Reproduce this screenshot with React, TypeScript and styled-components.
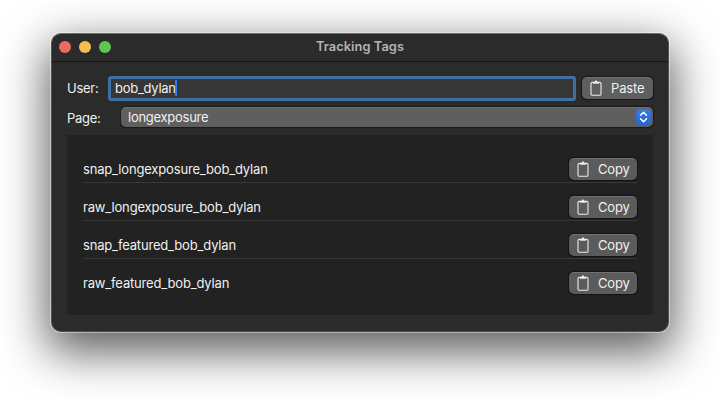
import React, { useState } from "react";
import styled, { createGlobalStyle } from "styled-components";

const GlobalStyle = createGlobalStyle`
  *, *::before, *::after { box-sizing: border-box; }
  html, body { margin: 0; background: #fff; }
  body { height: 400px; overflow: hidden; }
  body, button, input {
    font-family: Inter, "Liberation Sans", sans-serif;
    font-size: 13px;
    line-height: 16px;
    letter-spacing: -0.17px;
    color: #f0f0f0;
  }
`;

const Desktop = styled.main`
  width: 720px;
  height: 400px;
  padding: 33px 51px 0;
  overflow: hidden;
`;

const Window = styled.section`
  width: 618px;
  height: 299px;
  display: flex;
  flex-direction: column;
  border: 1px solid #505050;
  border-top-color: #6b6b6b;
  border-radius: 10px;
  background: #2b2b2b;
  overflow: hidden;
  box-shadow: 0 0 0 1px rgba(255, 255, 255, 0.4), 0 16px 46px 4px rgba(0, 0, 0, 0.64);
`;

const TitleBar = styled.header`
  height: 28px;
  flex: none;
  display: grid;
  grid-template-columns: 1fr auto 1fr;
  align-items: center;
  padding: 0 7px 1px;
  border-bottom: 1px solid #151515;
`;

const Lights = styled.div`
  display: flex;
  gap: 8px;
`;

const Light = styled.span<{ $color: string }>`
  width: 12px;
  height: 12px;
  border-radius: 50%;
  background: ${(p) => p.$color};
`;

const Title = styled.h1`
  margin: 0;
  font-size: 12.8px;
  font-weight: 600;
  line-height: 16px;
  letter-spacing: 0.08px;
  color: #b4b4b4;
`;

const Content = styled.div`
  padding: 14px 15px 0;
`;

const FieldRow = styled.div<{ $height: number; $labelWidth: number }>`
  display: grid;
  grid-template-columns: ${(p) => p.$labelWidth}px 1fr auto;
  align-items: center;
  height: ${(p) => p.$height}px;
`;

const UserInput = styled.div`
  height: 25px;
  display: flex;
  align-items: center;
  padding: 0 3px 2px 4px;
  border: 3px solid #3f6f9f;
  border-radius: 3px;
  background: #373737;
`;

const Value = styled.span`
  letter-spacing: -0.27px;
`;

const FieldLabel = styled(Value)`
  padding-bottom: 1px;
`;

const Caret = styled.span`
  width: 2px;
  height: 16px;
  margin-left: -1px;
  background: #3478f6;
`;

const PushButton = styled.button<{ $width: number; $tone?: string }>`
  width: ${(p) => p.$width}px;
  height: 22px;
  display: flex;
  align-items: center;
  padding: 0 0 1px 8px;
  gap: 9px;
  border: 0;
  border-top: 1px solid #717171;
  border-radius: 5px;
  background: ${(p) => p.$tone ?? "#5b5b5b"};
  box-shadow: 0 0 1px 0.5px rgba(0, 0, 0, 0.45);
`;

const PasteSlot = styled.div`
  margin-top: -2px;
  padding-left: 6px;
`;

const Select = styled.div`
  height: 20px;
  margin: -2px 0 0 1px;
  display: flex;
  align-items: center;
  justify-content: space-between;
  padding: 0 2px 2px 7px;
  border-top: 1px solid #717171;
  border-radius: 5px;
  background: #5f5f5f;
  box-shadow: 0 0 1px 0.5px rgba(0, 0, 0, 0.4);
`;

const Stepper = styled.svg`
  display: block;
  margin-top: 1px;
  border-radius: 4px;
  background: linear-gradient(#3979e5, #2864cd);
`;

const Panel = styled.div`
  height: 180px;
  padding: 10px 16px 0;
  background: #222222;
`;

const TagRow = styled.div`
  height: 38px;
  display: flex;
  align-items: center;
  justify-content: space-between;
  padding-top: 11px;
  border-bottom: 1px solid #383838;

  &:last-child {
    border-bottom-color: transparent;
  }
`;

const Icon = styled.svg`
  flex: none;
  display: block;
`;

function Clipboard() {
  return (
    <Icon width="12" height="16" viewBox="0 0 12 16" fill="none">
      <rect x="1" y="2.4" width="10" height="12.9" rx="1.4" stroke="#ededed" strokeWidth="1.1" />
      <path d="M3.1 3.8V2.2H4.6C4.7 1 5.1.4 6 .4s1.3.6 1.4 1.8h1.5v1.6z" fill="#ededed" />
    </Icon>
  );
}

const tags = ["snap_longexposure", "raw_longexposure", "snap_featured", "raw_featured"];

export default function App() {
  const [user] = useState("bob_dylan");
  return (
    <>
      <GlobalStyle />
      <Desktop>
        <Window>
          <TitleBar>
            <Lights>
              <Light $color="#ed6a5f" />
              <Light $color="#f5bf4f" />
              <Light $color="#61c554" />
            </Lights>
            <Title>Tracking Tags</Title>
          </TitleBar>
          <Content>
            <FieldRow $height={25} $labelWidth={41}>
              <FieldLabel>User:</FieldLabel>
              <UserInput>
                <Value>{user}</Value>
                <Caret />
              </UserInput>
              <PasteSlot>
                <PushButton $width={71} $tone="#5f5f5f">
                  <Clipboard />
                  Paste
                </PushButton>
              </PasteSlot>
            </FieldRow>
            <FieldRow $height={34} $labelWidth={53}>
              <FieldLabel>Page:</FieldLabel>
              <Select>
                <Value>longexposure</Value>
                <Stepper width="15" height="16" viewBox="0.5 0 15 16">
                  <path
                    d="M5 6.2 8 3.3l3 2.9M5 9.8l3 2.9 3-2.9"
                    fill="none"
                    stroke="#fff"
                    strokeWidth="1.5"
                    strokeLinecap="round"
                    strokeLinejoin="round"
                  />
                </Stepper>
              </Select>
            </FieldRow>
            <Panel>
              {tags.map((tag) => (
                <TagRow key={tag}>
                  <span>{`${tag}_${user}`}</span>
                  <PushButton $width={68}>
                    <Clipboard />
                    Copy
                  </PushButton>
                </TagRow>
              ))}
            </Panel>
          </Content>
        </Window>
      </Desktop>
    </>
  );
}
